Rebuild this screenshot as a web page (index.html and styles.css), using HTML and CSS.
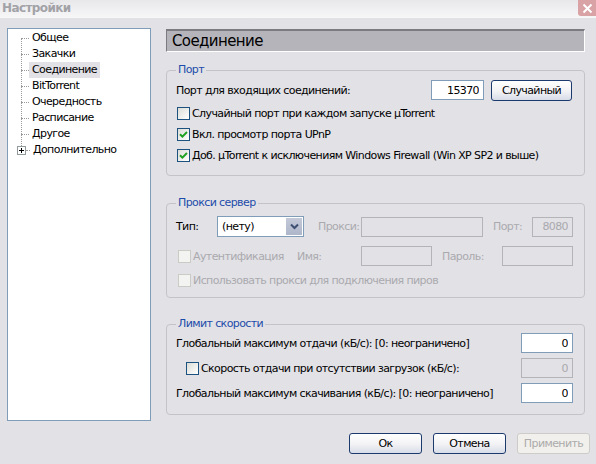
FILE: index.html
```html
<!DOCTYPE html>
<html lang="ru">
<head>
    <meta charset="UTF-8">
    <title>Настройки</title>
    <link rel="stylesheet" href="styles.css">
</head>
<body>
    <div class="window">
        <div class="titlebar">
            <span class="title">Настройки</span>
            <span class="close">
                <svg width="11" height="11" viewBox="0 0 11 11"><path d="M1.5 1.5 L9.5 9.5 M9.5 1.5 L1.5 9.5" stroke="#fff" stroke-width="2" fill="none"/></svg>
            </span>
        </div>

        <div class="content">
            <div class="tree">
                <ul>
                    <li><span class="branch"></span><span class="label">Общее</span></li>
                    <li><span class="branch"></span><span class="label">Закачки</span></li>
                    <li><span class="branch"></span><span class="label selected">Соединение</span></li>
                    <li><span class="branch"></span><span class="label">BitTorrent</span></li>
                    <li><span class="branch"></span><span class="label">Очередность</span></li>
                    <li><span class="branch"></span><span class="label">Расписание</span></li>
                    <li><span class="branch"></span><span class="label">Другое</span></li>
                    <li>
                        <span class="expander">
                            <svg width="9" height="9" viewBox="0 0 9 9"><rect x="0.5" y="0.5" width="8" height="8" fill="#fff" stroke="#919b9c"/><path d="M2 4.5 H7 M4.5 2 V7" stroke="#000" stroke-width="1"/></svg>
                        </span>
                        <span class="branch short"></span><span class="label">Дополнительно</span>
                    </li>
                </ul>
            </div>

            <div class="panel">
                <div class="page-title">Соединение</div>

                <fieldset class="group group-port">
                    <legend>Порт</legend>
                    <div class="row first">
                        <span>Порт для входящих соединений:</span>
                        <input class="field port-field" type="text" value="15370">
                        <button class="btn random-btn">Случайный</button>
                    </div>
                    <div class="row">
                        <span class="cb"></span>
                        <span>Случайный порт при каждом запуске µTorrent</span>
                    </div>
                    <div class="row">
                        <span class="cb"><svg width="9" height="9" viewBox="0 0 9 9"><path d="M1 4.2 L3.4 6.6 L8 2" stroke="#21a121" stroke-width="2" fill="none"/></svg></span>
                        <span>Вкл. просмотр порта UPnP</span>
                    </div>
                    <div class="row">
                        <span class="cb"><svg width="9" height="9" viewBox="0 0 9 9"><path d="M1 4.2 L3.4 6.6 L8 2" stroke="#21a121" stroke-width="2" fill="none"/></svg></span>
                        <span>Доб. µTorrent к исключениям Windows Firewall (Win XP SP2 и выше)</span>
                    </div>
                </fieldset>

                <fieldset class="group group-proxy">
                    <legend>Прокси сервер</legend>
                    <div class="row type-row">
                        <span class="type-label">Тип:</span>
                        <div class="select">
                            <span class="select-value">(нету)</span>
                            <span class="select-arrow">
                                <svg width="9" height="7" viewBox="0 0 9 7"><path d="M1 1.5 L4.5 5 L8 1.5" stroke="#3d4f73" stroke-width="2" fill="none"/></svg>
                            </span>
                        </div>
                        <span class="muted proxy-label">Прокси:</span>
                        <input class="field proxy-field" type="text" disabled>
                        <span class="muted port-label">Порт:</span>
                        <input class="field small-field" type="text" value="8080" disabled>
                    </div>
                    <div class="row auth-row">
                        <span class="cb disabled"></span>
                        <span class="muted auth-label">Аутентификация</span>
                        <span class="muted name-label">Имя:</span>
                        <input class="field name-field" type="text" disabled>
                        <span class="muted pass-label">Пароль:</span>
                        <input class="field name-field" type="text" disabled>
                    </div>
                    <div class="row peers-row">
                        <span class="cb disabled"></span>
                        <span class="muted">Использовать прокси для подключения пиров</span>
                    </div>
                </fieldset>

                <fieldset class="group group-limit">
                    <legend>Лимит скорости</legend>
                    <div class="row">
                        <span>Глобальный максимум отдачи (кБ/с): [0: неограничено]</span>
                        <input class="field limit-field" type="text" value="0">
                    </div>
                    <div class="row">
                        <span class="cb indent"></span>
                        <span>Скорость отдачи при отсутствии загрузок (кБ/с):</span>
                        <input class="field limit-field" type="text" value="0" disabled>
                    </div>
                    <div class="row">
                        <span>Глобальный максимум скачивания (кБ/с): [0: неограничено]</span>
                        <input class="field limit-field" type="text" value="0">
                    </div>
                </fieldset>

                <div class="buttons">
                    <button class="btn">Ок</button>
                    <button class="btn">Отмена</button>
                    <button class="btn" disabled>Применить</button>
                </div>
            </div>
        </div>
    </div>
</body>
</html>
```

FILE: styles.css
```css
body {
    margin: 0;
    background-color: #e2e1e6;
    font-family: "DejaVu Sans", sans-serif;
    font-size: 11px;
    letter-spacing: -0.6px;
    color: #000;
}
.window {
    width: 596px;
    height: 464px;
    overflow: hidden;
}
.titlebar {
    height: 18px;
    display: flex;
    justify-content: space-between;
    background: linear-gradient(#e8e8eb, #f7f7f8);
}
.title {
    font-weight: bold;
    font-size: 12px;
    color: #a2a2a7;
    padding-left: 2px;
    line-height: 17px;
}
.close {
    width: 18px;
    height: 16px;
    background-color: #d9a2a4;
    border-radius: 0 0 0 3px;
    display: flex;
    align-items: center;
    justify-content: center;
}
.content {
    display: flex;
    padding: 10px 0 0 7px;
}

/* дерево слева */
.tree {
    width: 144px;
    height: 393px;
    box-sizing: border-box;
    background-color: #fff;
    border: 1px solid #7f9db9;
    padding-top: 1px;
}
.tree ul {
    list-style: none;
    margin: 0 0 0 13px;
    padding: 0;
    position: relative;
}
.tree ul::before {
    content: "";
    position: absolute;
    left: 0;
    top: 8px;
    height: 112px;
    border-left: 1px dotted #9a9a9a;
}
.tree li {
    height: 16px;
    display: flex;
    align-items: center;
}
.branch {
    width: 8px;
    border-top: 1px dotted #9a9a9a;
}
.branch.short {
    width: 4px;
}
.expander {
    display: flex;
    margin-left: -4px;
    position: relative;
}
.label {
    padding: 0 3px;
    line-height: 16px;
}
.label.selected {
    background-color: #e2e1e6;
}

/* правая часть */
.panel {
    margin-left: 15px;
    width: 424px;
}
.page-title {
    width: 419px;
    height: 23px;
    margin-top: 1px;
    box-sizing: border-box;
    background-color: #b5b4bb;
    border-top: 2px solid #7b7b80;
    border-left: 1px solid #7b7b80;
    border-right: 1px solid #fff;
    border-bottom: 1px solid #fff;
    font-size: 15px;
    padding-left: 5px;
    display: flex;
    align-items: center;
}
.group {
    width: 419px;
    box-sizing: border-box;
    margin: 0;
    border: 1px solid #c4c4c8;
    border-radius: 4px;
}
.group legend {
    color: #1c4caa;
    padding: 0 2px;
    line-height: 14px;
}
.group-port {
    margin-top: 11px;
    padding: 3px 12px 9px 9px;
}
.group-proxy {
    margin-top: 20px;
    padding: 6px 11px 7px 9px;
}
.group-limit {
    margin-top: 19px;
    padding: 2px 11px 11px 9px;
}
.row {
    display: flex;
    align-items: center;
    height: 21px;
}
.group-port .row.first {
    height: 20px;
    margin-bottom: 3px;
}
.group-port .cb {
    margin-left: 1px;
}
.auth-row {
    height: 20px;
    margin-top: 9px;
}
.peers-row {
    height: 20px;
    margin-top: 4px;
}
.auth-row .cb, .peers-row .cb {
    margin-left: 2px;
}
.group-limit .row {
    height: 20px;
    margin-bottom: 5px;
}
.group-limit .row:last-child {
    margin-bottom: 0;
}
.cb.indent {
    margin-left: 10px;
}
.muted {
    color: #aaaaae;
}

.cb {
    width: 13px;
    height: 13px;
    box-sizing: border-box;
    border: 1px solid #1c5180;
    background: linear-gradient(135deg, #dcdcd7, #ffffff);
    display: flex;
    align-items: center;
    justify-content: center;
    margin-right: 2px;
    flex: none;
}
.cb.disabled {
    border-color: #cbcac4;
    background: #f3f3f1;
}

.field {
    height: 20px;
    box-sizing: border-box;
    border: 1px solid #7f9db9;
    background-color: #fff;
    text-align: right;
    padding: 0 4px;
    font: inherit;
    letter-spacing: inherit;
    color: #000;
    outline: none;
}
.field:disabled {
    border-color: #b4b4b8;
    background-color: #e2e1e6;
    color: #a9a9ad;
}
.port-field {
    width: 53px;
    margin-left: auto;
}
.random-btn {
    width: 81px;
    height: 19px;
    margin-left: 7px;
}
.type-label {
    width: 41px;
}
.select {
    width: 87px;
    height: 21px;
    box-sizing: border-box;
    border: 1px solid #7f9db9;
    background-color: #fff;
    display: flex;
    align-items: center;
    justify-content: space-between;
    padding: 1px;
}
.select-value {
    padding-left: 3px;
}
.select-arrow {
    width: 16px;
    height: 17px;
    background: linear-gradient(#c3c9d8, #aeb6ca);
    display: flex;
    align-items: center;
    justify-content: center;
}
.proxy-label {
    margin-left: 14px;
    width: 43px;
}
.proxy-field {
    width: 122px;
}
.port-label {
    margin-left: 10px;
    width: 39px;
}
.small-field {
    width: 41px;
}
.auth-label {
    width: 104px;
}
.name-label {
    width: 64px;
}
.name-field {
    width: 71px;
}
.pass-label {
    margin-left: 10px;
    width: 60px;
}
.limit-field {
    width: 52px;
    margin-left: auto;
}

.btn {
    height: 21px;
    box-sizing: border-box;
    border: 1px solid #1d3a6e;
    border-radius: 3px;
    background: linear-gradient(#ffffff, #f2f2f5 55%, #d7dce7);
    font: inherit;
    letter-spacing: inherit;
    color: #000;
    padding: 0;
}
.btn:disabled {
    border-color: #cdccc8;
    background: #f1f0ed;
    color: #acabaa;
}
.buttons {
    display: flex;
    justify-content: flex-end;
    gap: 11px;
    margin-top: 18px;
}
.buttons .btn {
    width: 73px;
}
```
